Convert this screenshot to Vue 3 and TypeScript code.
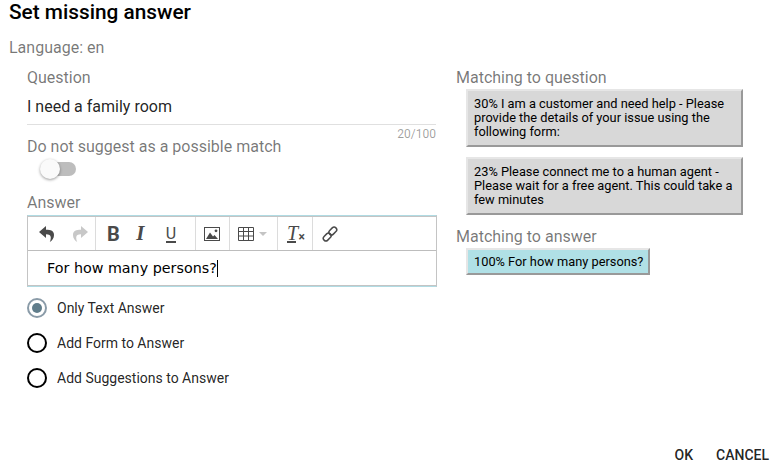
<script setup lang="ts">
interface Option { label: string; checked: boolean }
const options: Option[] = [
  { label: 'Only Text Answer', checked: true },
  { label: 'Add Form to Answer', checked: false },
  { label: 'Add Suggestions to Answer', checked: false },
]
const questionMatches: string[] = [
  '30% I am a customer and need help - Please provide the details of your issue using the following form:',
  '23% Please connect me to a human agent - Please wait for a free agent. This could take a few minutes',
]
</script>

<template>
  <div class="dialog">
    <h2 class="title">Set missing answer</h2>
    <div class="language">Language: en</div>
    <div class="columns">
      <div class="left">
        <div class="label">Question</div>
        <div class="input">I need a family room</div>
        <div class="counter">20/100</div>
        <div class="label suggest">Do not suggest as a possible match</div>
        <div class="toggle"><span class="track"></span><span class="thumb"></span></div>
        <div class="label answer">Answer</div>
        <div class="editor">
          <div class="toolbar">
            <div class="group g1">
              <svg width="16" height="18" viewBox="0 0 16 18"><path fill="#4a4a4a" d="M7 1 0 7l7 6V9.200c3 0 4.800.8 4.800 3.600 0 1.600-.4 3-1 4.200 2.600-1.500 4.200-4 4.200-7C15 6 12 4.800 7 4.800z"/></svg>
              <svg width="16" height="18" viewBox="0 0 16 18"><path fill="#c8c8c8" d="M9 1l7 6-7 6V9.200c-3 0-4.800.8-4.800 3.600 0 1.600.4 3 1 4.200C2.600 15.500 1 13 1 10c0-4 3-5.200 8-5.200z"/></svg>
            </div>
            <div class="group g2">
              <span class="fmt bold">B</span>
              <span class="fmt ital">I</span>
              <span class="fmt under"><span class="under-u">U</span></span>
            </div>
            <div class="group g3">
              <svg width="16" height="14" viewBox="0 0 16 14"><rect x=".5" y=".5" width="15" height="13" fill="none" stroke="#4a4a4a"/><path fill="#4a4a4a" d="M2 12 6 5.500l3 4 1.500-1.500L14 12z"/><circle cx="12" cy="3.800" r="1.400" fill="#4a4a4a"/></svg>
            </div>
            <div class="group g4">
              <svg width="16" height="14" viewBox="0 0 16 14"><path fill="none" stroke="#4a4a4a" d="M.5.500h15v13H.5zM.5 4.500h15M.5 9h15M5.500.500v13M10.500.500v13"/></svg>
              <svg class="caret" width="8" height="4" viewBox="0 0 8 4"><path fill="#c4c4c4" d="M0 0h8L4 4z"/></svg>
            </div>
            <div class="group g5">
              <span class="clear"><span class="clear-t">T</span><span class="clear-bar"></span><span class="clear-x">×</span></span>
            </div>
            <div class="group g6">
              <svg width="16" height="16" viewBox="0 0 16 16"><g fill="none" stroke="#4a4a4a" stroke-width="1.500"><rect x="8.200" y=".6" width="5.200" height="8.800" rx="2.600" transform="rotate(45 10.800 5)"/><rect x="2.600" y="6.600" width="5.200" height="8.800" rx="2.600" transform="rotate(45 5.200 11)"/></g></svg>
            </div>
          </div>
          <div class="content">For how many persons?<span class="cursor"></span></div>
        </div>
        <div class="radios">
          <div v-for="o in options" :key="o.label" class="radio">
            <span class="circle" :class="{ on: o.checked }"><span v-if="o.checked" class="dot"></span></span>
            <span>{{ o.label }}</span>
          </div>
        </div>
      </div>
      <div class="right">
        <div class="label">Matching to question</div>
        <div v-for="m in questionMatches" :key="m" class="card">{{ m }}</div>
        <div class="label match-answer">Matching to answer</div>
        <div class="card blue">100% For how many persons?</div>
      </div>
    </div>
    <div class="actions">
      <span class="btn">OK</span>
      <span class="btn">CANCEL</span>
    </div>
  </div>
</template>

<style>
html, body { margin: 0; background: #fff; }
</style>

<style scoped>
.dialog {
  width: 778px;
  height: 466px;
  overflow: hidden;
  box-sizing: border-box;
  display: flex;
  flex-direction: column;
  font-family: Roboto, sans-serif;
  color: #000;
  background: #fff;
}
.title {
  margin: 0;
  padding: 0 0 0 9px;
  height: 24px;
  line-height: 24px;
  font-size: 20.8px;
  font-weight: 500;
}
.language {
  margin: 14px 0 0 9px;
  height: 19px;
  line-height: 19px;
  font-size: 16px;
  color: rgba(0, 0, 0, 0.54);
}
.columns {
  display: flex;
  margin: 2px 0 0 27px;
  flex: 1;
}
.left { width: 410px; }
.right { margin-left: 20px; width: 290px; padding-top: 9px; }
.label {
  font-size: 16px;
  line-height: 19px;
  height: 19px;
  color: rgba(0, 0, 0, 0.54);
}
.left > .label:first-child { margin-top: 9px; }
.input {
  margin: 10px 1px 0 0;
  height: 27px;
  line-height: 20px;
  font-size: 16px;
  color: rgba(0, 0, 0, 0.87);
  border-bottom: 1px solid #e0e0e0;
}
.counter {
  margin: 2px 1px 0 0;
  text-align: right;
  font-size: 12px;
  line-height: 14px;
  color: rgba(0, 0, 0, 0.38);
}
.suggest { margin-top: -4px; }
.toggle { position: relative; height: 20px; width: 50px; margin: 3px 0 0 13px; }
.track {
  position: absolute; left: 2px; top: 3px;
  width: 34px; height: 14px; border-radius: 7px; background: #bdbdbd;
}
.thumb {
  position: absolute; left: 0; top: 0;
  width: 20px; height: 20px; border-radius: 50%; background: #fafafa;
  box-shadow: 0 1px 3px rgba(0, 0, 0, 0.4);
}
.answer { margin-top: 14px; }
.editor {
  margin-top: 3px;
  box-sizing: border-box;
  width: 410px;
  height: 72px;
  padding: 1px 0;
  border-style: solid;
  border-width: 1px;
  border-color: #b0dbe3 #c4c4c4 #b0dbe3 #c4c4c4;
  box-shadow: inset 0 1px 0 #c4c4c4, inset 0 -1px 0 #c4c4c4;
  background: #fff;
}
.toolbar {
  display: flex;
  box-sizing: border-box;
  height: 34px;
  border-bottom: 1px solid #bdbdbd;
}
.group {
  display: flex;
  align-items: center;
  box-sizing: border-box;
  border-right: 1px solid #dcdcdc;
  height: 100%;
}
.g1 { width: 68px; padding-left: 11px; gap: 17px; }
.g2 { width: 100px; padding-left: 11px; }
.g3 { width: 34px; padding-left: 8px; }
.g4 { width: 48px; padding-left: 8px; gap: 5px; }
.g5 { width: 35px; padding-left: 9px; }
.g6 { border-right: 0; padding-left: 9px; }
.fmt { width: 32px; color: #4a4a4a; }
.bold { font-family: Roboto, sans-serif; font-weight: 700; font-size: 20px; }
.ital { font-family: "Liberation Serif", serif; font-style: italic; font-weight: 700; font-size: 21px; }
.under { font-family: Roboto, sans-serif; font-size: 16px; }
.under-u { display: inline-block; line-height: 15px; border-bottom: 2px solid #4a4a4a; }
.clear { position: relative; display: block; width: 18px; height: 20px; }
.clear-t {
  font-family: "Liberation Serif", serif; font-style: italic; font-size: 20px; line-height: 18px;
  color: #4a4a4a; position: absolute; left: 0; top: 0;
}
.clear-bar { position: absolute; left: 0; top: 17px; width: 9px; height: 2px; background: #4a4a4a; }
.clear-x { position: absolute; left: 11.500px; top: 7px; font-size: 12px; line-height: 12px; color: #4a4a4a; font-weight: 700; }
.content {
  padding-left: 19px;
  height: 34px;
  font-family: "DejaVu Sans", sans-serif;
  font-size: 14.3px;
  display: flex;
  align-items: center;
}
.cursor { display: inline-block; width: 1px; height: 17px; background: #000; }
.radios { margin-top: 3px; }
.radio {
  display: flex;
  align-items: center;
  height: 35px;
  font-size: 14px;
  color: rgba(0, 0, 0, 0.87);
  gap: 10px;
}
.circle {
  box-sizing: border-box;
  width: 20px; height: 20px;
  border-radius: 50%;
  border: 2px solid #000;
  display: flex; align-items: center; justify-content: center;
}
.circle.on { border-color: #8a9ba8; }
.dot { width: 10px; height: 10px; border-radius: 50%; background: #607d8b; }
.right > .label { margin-left: -1px; }
.card {
  box-sizing: border-box;
  width: 277px;
  margin: 2px 0 10px 9px;
  padding: 6px;
  border: 2px solid;
  border-color: #e6e6e6 #999 #999 #e6e6e6;
  background: #d8d8d8;
  font-size: 12.8px;
  line-height: 14px;
  color: #000;
}
.card.blue {
  width: fit-content;
  background: #b0e0e6;
  padding: 5px 5px 4px 6px;
  margin-top: 2px;
}
.right > .match-answer { margin-top: 12px; }
.actions {
  display: flex;
  justify-content: flex-end;
  gap: 23px;
  padding-right: 9px;
  height: 20px;
  line-height: 18px;
  font-size: 14px;
  font-weight: 500;
  color: rgba(0, 0, 0, 0.87);
  flex-shrink: 0;
}
</style>
